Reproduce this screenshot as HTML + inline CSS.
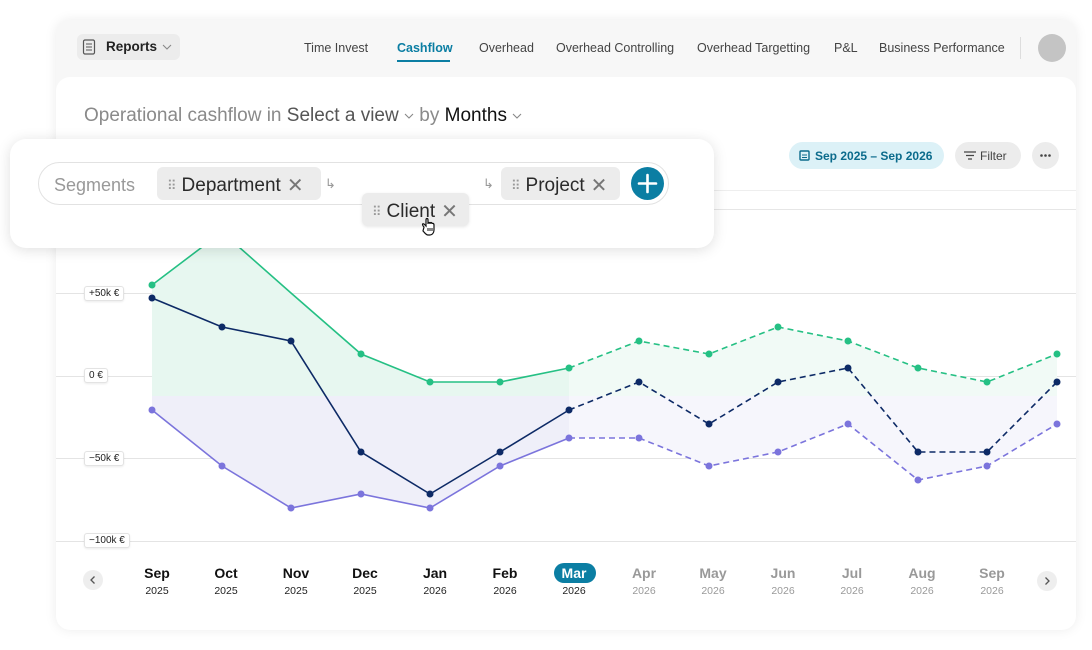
<!DOCTYPE html>
<html><head><meta charset="utf-8"><style>
*{margin:0;padding:0;box-sizing:border-box}
body{width:1092px;height:650px;background:#fff;font-family:"Liberation Sans",sans-serif;position:relative;overflow:hidden}
.a{position:absolute}
.card{left:56px;top:20px;width:1020px;height:610px;border-radius:14px;background:#f7f7f7;box-shadow:0 0 12px rgba(0,0,0,.08);overflow:hidden}
.inner{left:0;top:57px;width:1020px;height:560px;background:#fff;border-radius:14px 14px 0 0}
.nav{top:41px;font-size:12.5px;color:#444}
.mo{font-size:14px;font-weight:bold;color:#111;text-align:center;width:60px}
.yr{font-size:10.5px;color:#222;text-align:center;width:60px}
.g{color:#999!important}
.chip{background:#ececec;border-radius:6px;height:33px;font-size:19px;color:#2a2a2a;display:flex;align-items:center;padding-top:4px}
.dots{color:#999;font-size:13px;margin:0 6px 0 10px;letter-spacing:-1px}
.x{color:#777;font-size:20px;margin:0 10px 0 6px}
.yl{background:#fff;border:1px solid #e3e3e3;border-radius:3px;font-size:10px;color:#222;padding:1px 4px;box-shadow:0 1px 2px rgba(0,0,0,.08)}
.chev{display:inline-block;vertical-align:middle}
</style></head><body>
<div class="a card">
 <div class="a inner"></div>
</div>
<div class="a" style="left:77px;top:34px;width:103px;height:26px;background:#ececec;border-radius:6px"></div>
<svg class="a" style="left:82px;top:39px" width="14" height="16"><rect x="1.5" y="1" width="11" height="14" rx="1.5" fill="none" stroke="#555" stroke-width="1.2"/><path d="M4 5h6M4 8h6M4 11h6" stroke="#555" stroke-width="1"/></svg>
<div class="a" style="left:106px;top:39px;font-size:13.5px;font-weight:bold;color:#222">Reports</div>
<svg class="a" style="left:162px;top:44px" width="10" height="6"><path d="M1 1l4 4 4-4" fill="none" stroke="#888" stroke-width="1.1"/></svg>
<div class="a nav" style="left:304px">Time Invest</div>
<div class="a nav" style="left:397px;color:#0b7ea3;font-weight:bold">Cashflow</div>
<div class="a" style="left:397px;top:60px;width:53px;height:2px;background:#0b7ea3"></div>
<div class="a nav" style="left:479px">Overhead</div>
<div class="a nav" style="left:556px">Overhead Controlling</div>
<div class="a nav" style="left:697px">Overhead Targetting</div>
<div class="a nav" style="left:834px">P&amp;L</div>
<div class="a nav" style="left:879px">Business Performance</div>
<div class="a" style="left:1020px;top:37px;width:1px;height:22px;background:#ddd"></div>
<div class="a" style="left:1038px;top:34px;width:28px;height:28px;border-radius:50%;background:#c4c4c4"></div>
<div class="a" style="left:84px;top:105px;font-size:19px;color:#8a8a8a;white-space:nowrap">Operational cashflow in <span style="color:#555">Select a view</span> <svg class="chev" width="10" height="6"><path d="M1 1l4 4 4-4" fill="none" stroke="#888" stroke-width="1.1"/></svg> by <span style="color:#111">Months</span> <svg class="chev" width="10" height="6"><path d="M1 1l4 4 4-4" fill="none" stroke="#888" stroke-width="1.1"/></svg></div>
<div class="a" style="left:789px;top:142px;width:155px;height:27px;border-radius:14px;background:#dcf1f7;color:#0b6b8c;font-size:12px;font-weight:bold;padding:7px 0 0 26px">Sep 2025 – Sep 2026</div>
<svg class="a" style="left:799px;top:150px" width="11" height="11"><rect x="1" y="1" width="9" height="9" rx="1" fill="none" stroke="#0b6b8c" stroke-width="1.4"/><path d="M3 5h5M3 7.5h5" stroke="#0b6b8c"/></svg>
<div class="a" style="left:955px;top:142px;width:66px;height:27px;border-radius:14px;background:#ececec;color:#444;font-size:12px;padding:7px 0 0 25px">Filter</div>
<svg class="a" style="left:963px;top:150px" width="14" height="11"><path d="M1 2h12M3 5.5h8M5 9h4" stroke="#444" stroke-width="1.3"/></svg>
<div class="a" style="left:1032px;top:142px;width:27px;height:27px;border-radius:50%;background:#ececec"></div>
<svg class="a" style="left:1032px;top:142px" width="27" height="27"><g fill="#444"><circle cx="9.5" cy="13.5" r="1.3"/><circle cx="13.5" cy="13.5" r="1.3"/><circle cx="17.5" cy="13.5" r="1.3"/></g></svg>
<div class="a" style="left:56px;top:190px;width:1020px;height:1px;background:#eee"></div>
<div class="a" style="left:56px;top:209px;width:1020px;height:1px;background:#e6e6e6"></div>

<svg class="a" style="left:0;top:0" width="1092" height="650">
<g stroke="#e4e4e4" stroke-width="1"><path d="M56 293.5H1076M56 376.5H1076M56 458.5H1076M56 541.5H1076"/></g>
<polygon points="152,396 152,285 222,232 291,293 361,354 430,382 500,382 569,368 569,396" fill="#e7f7f0"/>
<polygon points="569,396 569,368 639,341 709,354 778,327 848,341 918,368 987,382 1057,354 1057,396" fill="#f1faf6"/>
<polygon points="152,396 152,410 222,466 291,508 361,494 430,508 500,466 569,438 569,396" fill="#efeff9"/>
<polygon points="569,396 569,438 639,438 709,466 778,452 848,424 918,480 987,466 1057,424 1057,396" fill="#f6f6fc"/>
<g fill="none" stroke-width="1.6">
<polyline points="152,285 222,232 291,293 361,354 430,382 500,382 569,368" stroke="#25c084"/>
<polyline points="569,368 639,341 709,354 778,327 848,341 918,368 987,382 1057,354" stroke="#25c084" stroke-dasharray="6 4"/>
<polyline points="152,298 222,327 291,341 361,452 430,494 500,452 569,410" stroke="#0d2a66"/>
<polyline points="569,410 639,382 709,424 778,382 848,368 918,452 987,452 1057,382" stroke="#0d2a66" stroke-dasharray="6 4"/>
<polyline points="152,410 222,466 291,508 361,494 430,508 500,466 569,438" stroke="#7b74dc"/>
<polyline points="569,438 639,438 709,466 778,452 848,424 918,480 987,466 1057,424" stroke="#7b74dc" stroke-dasharray="6 4"/>
</g>
<g fill="#25c084"><circle cx="152" cy="285" r="3.5"/><circle cx="361" cy="354" r="3.5"/><circle cx="430" cy="382" r="3.5"/><circle cx="500" cy="382" r="3.5"/><circle cx="569" cy="368" r="3.5"/><circle cx="639" cy="341" r="3.5"/><circle cx="709" cy="354" r="3.5"/><circle cx="778" cy="327" r="3.5"/><circle cx="848" cy="341" r="3.5"/><circle cx="918" cy="368" r="3.5"/><circle cx="987" cy="382" r="3.5"/><circle cx="1057" cy="354" r="3.5"/></g>
<g fill="#0d2a66"><circle cx="152" cy="298" r="3.5"/><circle cx="222" cy="327" r="3.5"/><circle cx="291" cy="341" r="3.5"/><circle cx="361" cy="452" r="3.5"/><circle cx="430" cy="494" r="3.5"/><circle cx="500" cy="452" r="3.5"/><circle cx="569" cy="410" r="3.5"/><circle cx="639" cy="382" r="3.5"/><circle cx="709" cy="424" r="3.5"/><circle cx="778" cy="382" r="3.5"/><circle cx="848" cy="368" r="3.5"/><circle cx="918" cy="452" r="3.5"/><circle cx="987" cy="452" r="3.5"/><circle cx="1057" cy="382" r="3.5"/></g>
<g fill="#7b74dc"><circle cx="152" cy="410" r="3.5"/><circle cx="222" cy="466" r="3.5"/><circle cx="291" cy="508" r="3.5"/><circle cx="361" cy="494" r="3.5"/><circle cx="430" cy="508" r="3.5"/><circle cx="500" cy="466" r="3.5"/><circle cx="569" cy="438" r="3.5"/><circle cx="639" cy="438" r="3.5"/><circle cx="709" cy="466" r="3.5"/><circle cx="778" cy="452" r="3.5"/><circle cx="848" cy="424" r="3.5"/><circle cx="918" cy="480" r="3.5"/><circle cx="987" cy="466" r="3.5"/><circle cx="1057" cy="424" r="3.5"/></g>
</svg>
<div class="a yl" style="left:84px;top:286px">+50k €</div>
<div class="a yl" style="left:84px;top:368px">0 €</div>
<div class="a yl" style="left:84px;top:451px">−50k €</div>
<div class="a yl" style="left:84px;top:533px">−100k €</div>

<div class="a" style="left:83px;top:570px;width:20px;height:20px;border-radius:50%;background:#eee"></div>
<svg class="a" style="left:83px;top:570px" width="20" height="20"><path d="M11.5 6.5l-3.5 3.5 3.5 3.5" fill="none" stroke="#555" stroke-width="1.3"/></svg>
<div class="a" style="left:1037px;top:571px;width:20px;height:20px;border-radius:50%;background:#eee"></div>
<svg class="a" style="left:1037px;top:571px" width="20" height="20"><path d="M8.5 6.5l3.5 3.5-3.5 3.5" fill="none" stroke="#555" stroke-width="1.3"/></svg>
<div class="a" style="left:554px;top:563px;width:42px;height:20px;border-radius:10px;background:#0b7ea3"></div>
<div class="a mo" style="left:127px;top:565px">Sep</div><div class="a yr" style="left:127px;top:585px">2025</div>
<div class="a mo" style="left:196px;top:565px">Oct</div><div class="a yr" style="left:196px;top:585px">2025</div>
<div class="a mo" style="left:266px;top:565px">Nov</div><div class="a yr" style="left:266px;top:585px">2025</div>
<div class="a mo" style="left:335px;top:565px">Dec</div><div class="a yr" style="left:335px;top:585px">2025</div>
<div class="a mo" style="left:405px;top:565px">Jan</div><div class="a yr" style="left:405px;top:585px">2026</div>
<div class="a mo" style="left:475px;top:565px">Feb</div><div class="a yr" style="left:475px;top:585px">2026</div>
<div class="a mo" style="left:544px;top:565px;color:#fff">Mar</div><div class="a yr" style="left:544px;top:585px">2026</div>
<div class="a mo g" style="left:614px;top:565px">Apr</div><div class="a yr g" style="left:614px;top:585px">2026</div>
<div class="a mo g" style="left:683px;top:565px">May</div><div class="a yr g" style="left:683px;top:585px">2026</div>
<div class="a mo g" style="left:753px;top:565px">Jun</div><div class="a yr g" style="left:753px;top:585px">2026</div>
<div class="a mo g" style="left:822px;top:565px">Jul</div><div class="a yr g" style="left:822px;top:585px">2026</div>
<div class="a mo g" style="left:892px;top:565px">Aug</div><div class="a yr g" style="left:892px;top:585px">2026</div>
<div class="a mo g" style="left:962px;top:565px">Sep</div><div class="a yr g" style="left:962px;top:585px">2026</div>

<div class="a" style="left:10px;top:139px;width:704px;height:109px;background:#fff;border-radius:16px;box-shadow:0 2px 14px rgba(0,0,0,.13)"></div>
<div class="a" style="left:38px;top:162px;width:631px;height:43px;border:1.5px solid #e2e2e2;border-radius:22px"></div>
<div class="a" style="left:54px;top:175px;font-size:18px;color:#999">Segments</div>
<div class="a chip" style="left:157px;top:167px;width:164px"><span class="dots">⠿</span>Department<span class="x">✕</span></div>
<div class="a" style="left:325px;top:176px;color:#999;font-size:13px">↳</div>
<div class="a" style="left:483px;top:176px;color:#999;font-size:13px">↳</div>
<div class="a chip" style="left:501px;top:167px;width:119px"><span class="dots">⠿</span>Project<span class="x">✕</span></div>
<div class="a chip" style="left:362px;top:193px;width:107px;box-shadow:0 1px 3px rgba(0,0,0,.1)"><span class="dots">⠿</span>Client<span class="x">✕</span></div>
<div class="a" style="left:631px;top:167px;width:33px;height:33px;border-radius:50%;background:#0b7ea3"></div>
<svg class="a" style="left:631px;top:167px" width="33" height="33"><path d="M16.5 8v17M8 16.5h17" stroke="#fff" stroke-width="2.6" stroke-linecap="round"/></svg>
<svg class="a" style="left:419px;top:216px" width="22" height="22"><path d="M5 11c-2-2-2-4 0-3l2 2V4c0-2 2-2 2 0v4c0-2 2-2 2 0 0-2 2-2 2 0 0-1 2-1 2 1v5c0 3-2 5-4 5h-2c-2 0-3-2-5-4z" fill="#fff" stroke="#111" stroke-width="1.2"/><path d="M9 12v3M11 12v3M13 12v3" stroke="#111"/></svg>
</body></html>
